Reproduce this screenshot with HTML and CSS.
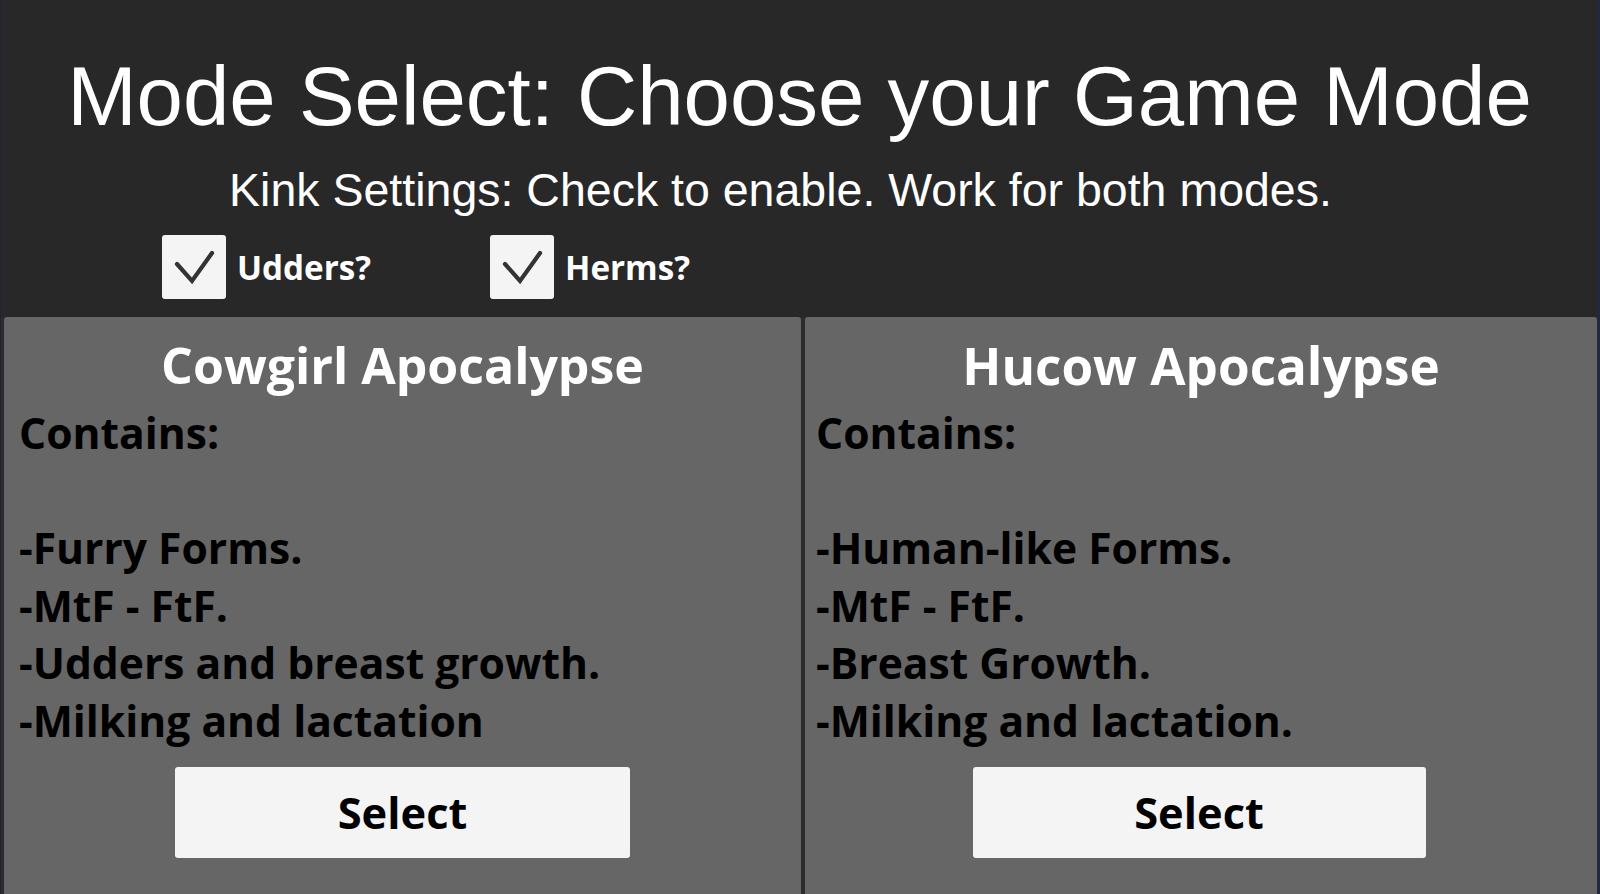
FILE: index.html
```html
<!DOCTYPE html>
<html lang="en">
<head>
<meta charset="utf-8">
<title>Mode Select</title>
<link rel="stylesheet" href="styles.css">
</head>
<body>
<div class="screen">
  <header class="header">
    <h1 class="title">Mode Select: Choose your Game Mode</h1>
    <p class="subtitle">Kink Settings: Check to enable. Work for both modes.</p>
    <div class="kinks">
      <label class="kink">
        <span class="box"><svg viewBox="0 0 64 64" width="64" height="64"><polyline points="15,29 30,46 50,18" fill="none" stroke="#333" stroke-width="4.2" stroke-linecap="round" stroke-linejoin="miter"/></svg></span>
        <span class="kink-label">Udders?</span>
      </label>
      <label class="kink">
        <span class="box"><svg viewBox="0 0 64 64" width="64" height="64"><polyline points="15,29 30,46 50,18" fill="none" stroke="#333" stroke-width="4.2" stroke-linecap="round" stroke-linejoin="miter"/></svg></span>
        <span class="kink-label">Herms?</span>
      </label>
    </div>
  </header>
  <main class="modes">
    <section class="panel panel-left">
      <h2 class="panel-title">Cowgirl Apocalypse</h2>
      <ul class="contents">
        <li>Contains:</li>
        <li class="blank">&nbsp;</li>
        <li>-Furry Forms.</li>
        <li>-MtF - FtF.</li>
        <li>-Udders and breast growth.</li>
        <li>-Milking and lactation</li>
      </ul>
      <button class="select">Select</button>
    </section>
    <section class="panel panel-right">
      <h2 class="panel-title">Hucow Apocalypse</h2>
      <ul class="contents">
        <li>Contains:</li>
        <li class="blank">&nbsp;</li>
        <li>-Human-like Forms.</li>
        <li>-MtF - FtF.</li>
        <li>-Breast Growth.</li>
        <li>-Milking and lactation.</li>
      </ul>
      <button class="select">Select</button>
    </section>
  </main>
</div>
</body>
</html>
```
FILE: styles.css
```css
html, body {
  margin: 0;
  padding: 0;
  width: 1600px;
  height: 894px;
  overflow: hidden;
  background: #282828;
}

.screen {
  width: 1600px;
  height: 894px;
  box-sizing: border-box;
  border-left: 1px solid #1f2735;
  border-right: 2px solid #1c2a48;
  background: #282828;
  display: flex;
  flex-direction: column;
}

.header {
  height: 317px;
  box-sizing: border-box;
  padding-top: 49px;
  flex: none;
}

.title {
  margin: 0;
  font-family: "Liberation Sans", Arial, sans-serif;
  font-weight: normal;
  font-size: 83.4px;
  line-height: 96px;
  color: #ffffff;
  text-align: center;
}

.subtitle {
  margin: 18px 0 0 0;
  padding-right: 38px;
  font-family: "Liberation Sans", Arial, sans-serif;
  font-size: 46.5px;
  line-height: 54px;
  color: #ffffff;
  text-align: center;
}

.kinks {
  margin-top: 18px;
  padding-left: 161px;
  display: grid;
  grid-template-columns: 328px auto;
  height: 64px;
}

.kink {
  display: flex;
  align-items: center;
  gap: 11px;
}

.box {
  width: 64px;
  height: 64px;
  background: #f4f4f4;
  border-radius: 3px;
  display: block;
  flex: none;
}

.box svg {
  display: block;
}

.kink-label {
  font-family: "Open Sans", sans-serif;
  font-weight: bold;
  font-size: 33.2px;
  color: #ffffff;
  padding-top: 1px;
}

.modes {
  flex: 1;
  display: grid;
  grid-template-columns: 797px 1fr;
  gap: 4px;
  padding: 0 1px 0 3px;
  background: #2c2c2c;
}

.panel {
  background: #666666;
  border-radius: 3px 3px 0 0;
  padding: 14px 15px 0 15px;
  display: flex;
  flex-direction: column;
  height: 600px;
}

.panel-right {
  padding-left: 11px;
}

.panel-title {
  margin: 0;
  font-family: "Open Sans", sans-serif;
  font-weight: bold;
  font-size: 50px;
  line-height: 68px;
  color: #ffffff;
  text-align: center;
}

.panel-right .panel-title {
  font-size: 51.2px;
  padding-left: 4px;
}

.contents {
  list-style: none;
  margin: 5px 0 0 0;
  padding: 0;
  font-family: "Open Sans", sans-serif;
  font-weight: bold;
  font-size: 42.6px;
  line-height: 57.5px;
  color: #000000;
}

.contents li {
  margin: 0;
  white-space: nowrap;
}

.select {
  align-self: center;
  margin-top: 18px;
  width: 455px;
  height: 91px;
  background: #f4f4f4;
  border: none;
  border-radius: 3px;
  font-family: "Open Sans", sans-serif;
  font-weight: bold;
  font-size: 43.4px;
  color: #000000;
  padding: 0;
  display: flex;
  align-items: center;
  justify-content: center;
}

.panel-right .select {
  width: 453px;
}
```
